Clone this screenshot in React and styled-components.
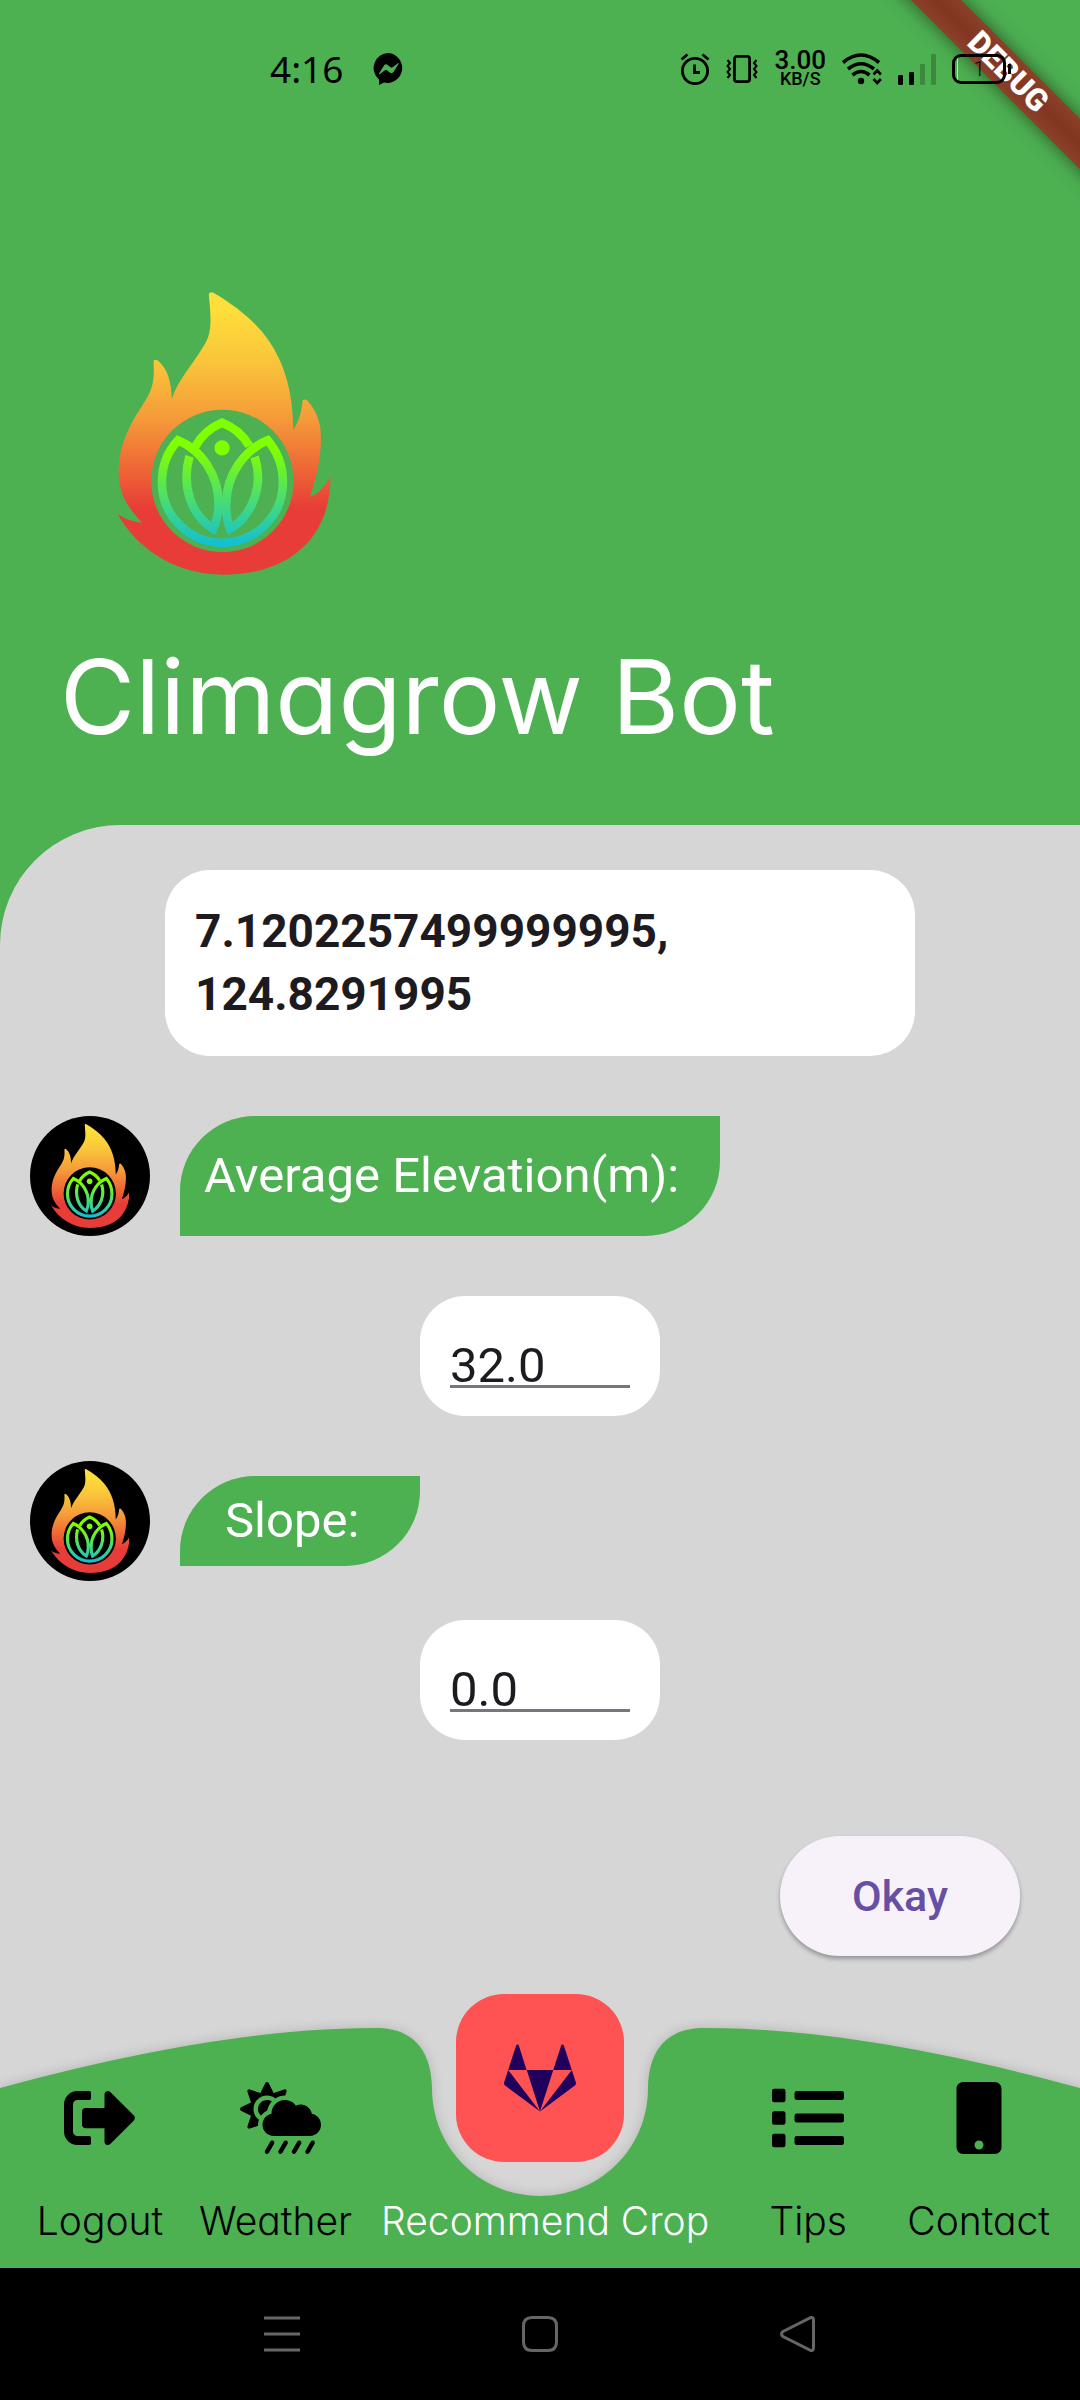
import React, { useId } from "react";
import styled, { createGlobalStyle } from "styled-components";
import { FaSignOutAlt, FaCloudSunRain, FaList, FaMobile } from "react-icons/fa";

const color = {
  green: "#4db051",
  panel: "#d6d6d6",
  ink: "#1d1b20",
  outline: "#79747e",
  violet: "#6750a4",
  tonal: "#f7f2fa",
  coral: "#ff5252",
  indigo: "#21005d",
};

const GlobalStyle = createGlobalStyle`
  *, *::before, *::after { box-sizing: border-box; }
  body { margin: 0; background: ${color.green}; }
  button, input { font: inherit; }
  svg { display: block; }
`;

const Screen = styled.div`
  position: relative;
  display: flex;
  flex-direction: column;
  min-height: 100vh;
  overflow: hidden;
  background: ${color.green};
  color: ${color.ink};
  font-family: Roboto, "Liberation Sans", sans-serif;
`;

/* ---------- status bar ---------- */

const StatusBar = styled.div`
  position: relative;
  z-index: 2;
  display: flex;
  align-items: center;
  justify-content: space-between;
  height: 138px;
  padding: 0 69px 0 270px;
  color: #000;
`;

const StatusGroup = styled.div`
  display: flex;
  align-items: center;
  gap: ${(p) => p.$gap}px;
`;

const Clock = styled.time`
  font-family: "Noto Sans", sans-serif;
  font-size: 37px;
  line-height: 48px;
`;

const NetSpeed = styled.div`
  display: flex;
  flex-direction: column;
  align-items: center;
  font-weight: 500;
`;

const SpeedValue = styled.span`
  font-size: 26px;
  line-height: 20px;
`;

const SpeedUnit = styled.span`
  font-size: 18px;
  line-height: 18px;
`;

const Battery = styled.div`
  display: flex;
  align-items: center;
  gap: 2px;
  &::after {
    content: "";
    width: 3px;
    height: 10px;
    background: #000;
  }
`;

const BatteryShell = styled.div`
  display: flex;
  align-items: center;
  justify-content: center;
  width: 54px;
  height: 30px;
  border: 3px solid #000;
  border-radius: 9px;
  font-size: 20px;
  line-height: 20px;
  font-weight: 300;
  background: linear-gradient(90deg, transparent 2px, #e8e84a 2px, #e8e84a 3px, transparent 3px);
`;

/* ---------- debug ribbon ---------- */

const RibbonCorner = styled.div`
  position: absolute;
  top: 0;
  right: 0;
  z-index: 1;
  width: 240px;
  height: 240px;
  overflow: hidden;
`;

const Ribbon = styled.div`
  position: absolute;
  top: 54px;
  left: 18px;
  width: 300px;
  height: 36px;
  transform: rotate(45deg);
  background: linear-gradient(#8a4129, #823622 50%, #8a4129);
  box-shadow: 0 0 18px rgba(0, 0, 0, 0.5);
  color: #fff;
  font-size: 31px;
  line-height: 36px;
  font-weight: 900;
  text-align: center;
`;

/* ---------- header ---------- */

const Header = styled.header`
  display: flex;
  flex-direction: column;
  align-items: flex-start;
  gap: 60px;
  padding: 154px 60px 66px;
`;

const HeaderLogo = styled.div`
  padding-left: 57px;
  svg { height: 283px; }
`;

const Title = styled.h1`
  margin: 0;
  color: #fff;
  font-family: Inter, sans-serif;
  font-feature-settings: "cv11";
  font-size: 103px;
  line-height: 124px;
  font-weight: 400;
`;

/* ---------- conversation ---------- */

const Conversation = styled.main`
  flex: 1;
  display: flex;
  flex-direction: column;
  align-items: center;
  padding: 45px 30px 72px;
  border-top-left-radius: 120px;
  background: ${color.panel};
`;

const Coordinates = styled.p`
  width: 750px;
  max-width: 100%;
  margin: 0;
  padding: 30px;
  border-radius: 45px;
  background: #fff;
  font-size: 46px;
  line-height: 63px;
  font-weight: 700;
`;

const BotMessage = styled.div`
  display: flex;
  align-items: center;
  align-self: stretch;
  gap: 30px;
  margin-top: ${(p) => p.$above}px;
`;

const Avatar = styled.div`
  display: flex;
  align-items: center;
  justify-content: center;
  width: 120px;
  height: 120px;
  border-radius: 50%;
  background: #000;
  svg { height: 104px; }
`;

const Bubble = styled.label`
  display: flex;
  align-items: center;
  width: ${(p) => p.$width}px;
  height: ${(p) => p.$height}px;
  padding-left: ${(p) => p.$inset}px;
  border-radius: 75px 0 75px 0;
  background: ${color.green};
  color: #fff;
  font-size: 49px;
  line-height: 60px;
`;

const Answer = styled.div`
  width: 240px;
  height: 120px;
  margin-top: ${(p) => p.$above}px;
  padding: 30px;
  border-radius: 45px;
  background: #fff;
`;

const AnswerInput = styled.input`
  display: block;
  width: 100%;
  height: 62px;
  padding: 20px 0 0;
  border: 0;
  border-bottom: 3px solid ${color.outline};
  border-radius: 0;
  outline: 0;
  background: transparent;
  color: ${color.ink};
  font-size: 49px;
`;

const OkayButton = styled.button`
  align-self: flex-end;
  width: 240px;
  height: 120px;
  margin: 96px 30px 0 0;
  border: 0;
  border-radius: 60px;
  background: ${color.tonal};
  box-shadow: 0 3px 4px rgba(0, 0, 0, 0.3);
  color: ${color.violet};
  font-size: 43px;
  line-height: 60px;
  font-weight: 500;
`;

/* ---------- bottom navigation ---------- */

const NavArea = styled.nav`
  position: relative;
  height: 240px;
  background: ${color.panel};
`;

const NavShape = styled.svg`
  position: absolute;
  inset: 0;
  width: 100%;
  height: 100%;
  overflow: visible;
  filter: drop-shadow(0 0 6px rgba(0, 0, 0, 0.16));
`;

const NavList = styled.ul`
  position: relative;
  display: flex;
  justify-content: space-between;
  margin: 0;
  padding: 54px 30px 0;
  list-style: none;
`;

const NavLink = styled.a`
  display: flex;
  flex-direction: column;
  align-items: center;
  gap: 43px;
  min-width: 140px;
  color: ${(p) => (p.$active ? "#fff" : "#000")};
  font-family: Inter, sans-serif;
  font-feature-settings: "cv11";
  font-size: 39px;
  line-height: 48px;
  font-weight: 300;
  text-decoration: none;
  white-space: nowrap;
`;

const NavIcon = styled.span`
  width: 72px;
  height: 72px;
  svg {
    width: ${(p) => p.$width}px;
    height: 72px;
  }
`;

const CenterButton = styled.button`
  position: absolute;
  top: -34px;
  left: 50%;
  display: flex;
  align-items: center;
  justify-content: center;
  width: 168px;
  height: 168px;
  margin-left: -84px;
  padding: 0;
  border: 0;
  border-radius: 48px;
  background: ${color.coral};
  color: ${color.indigo};
`;

const SystemBar = styled.div`
  display: flex;
  align-items: center;
  justify-content: center;
  gap: 222px;
  height: 132px;
  background: #000;
`;

const SystemKey = styled.button`
  padding: 0;
  border: 0;
  background: none;
  color: #666;
`;

/* ---------- drawings ---------- */

function FlameLogo() {
  const id = useId();
  return (
    <svg viewBox="82 66 643 851" role="img" aria-label="Climagrow">
      <defs>
        <linearGradient id={id + "f"} gradientUnits="userSpaceOnUse" x1="0" y1="66" x2="0" y2="916">
          <stop offset="0.06" stopColor="#ffde3b" />
          <stop offset="0.24" stopColor="#f9c63a" />
          <stop offset="0.45" stopColor="#f59a39" />
          <stop offset="0.64" stopColor="#ee6236" />
          <stop offset="0.77" stopColor="#e73c38" />
        </linearGradient>
        <linearGradient id={id + "l"} gradientUnits="userSpaceOnUse" x1="0" y1="445" x2="0" y2="833">
          <stop offset="0.25" stopColor="#80ff00" />
          <stop offset="0.55" stopColor="#55e45c" />
          <stop offset="0.97" stopColor="#15c0d0" />
        </linearGradient>
      </defs>
      <path
        fill={`url(#${id}f)`}
        fillRule="evenodd"
        d="M358 73Q361 64 372 68C430 102 480 140 520 188C580 262 611 355 612 480C630 455 637 425 640 393Q645 386 655 393C684 425 696 465 695 500C697 560 681 628 662 682C688 674 712 646 724 620C725 700 700 770 655 820C590 890 500 916 400 916C270 916 150 850 83 733C100 748 130 757 158 760C110 710 88 670 87 610C86 540 110 482 150 420C188 362 195 345 192 273Q196 266 206 273C235 299 245 335 247 388C262 335 310 285 343 228C370 188 364 140 358 73ZM399 420a214 214 0 1 0 0 428a214 214 0 1 0 0-428Z"
      />
      <g fill="none" stroke={`url(#${id}l)`} strokeWidth="26">
        <path d="M387 700C387 615 334 540 265 512C234 546 217 590 217 638A182 182 0 0 0 581 638C581 590 564 546 535 512C466 540 411 615 411 700" />
        <path d="M317 531C338 493 366 472 398 459C431 472 460 493 480 529" />
        <path d="M300 560C275 650 305 737 371 778C382 755 389 730 388 690" />
        <path d="M496 562C525 650 487 740 422 778C413 755 409 730 410 690" />
      </g>
      <circle cx="398" cy="535" r="23" fill="#80ff00" />
    </svg>
  );
}

function MessengerIcon() {
  return (
    <svg width="31" height="32" viewBox="0 0 31 32" aria-hidden="true">
      <path d="M15.500 0a15 15 0 1 1-4.500 29.600L6 32v-5.500A15 15 0 0 1 15.500 0z" />
      <path fill={color.green} d="M6 20.500l5-8q1.500-2 3.600-.5l3 2.300q1 .7 2 0l5.400-4q1.200-.6.500.700l-5 8.100q-1.500 2-3.600.5l-3-2.300q-1-.6-2 0l-5.200 3.900q-1.300.5-.7-.7z" />
    </svg>
  );
}

function AlarmIcon() {
  return (
    <svg width="30" height="32" viewBox="0 0 30 32" fill="none" stroke="#000" strokeWidth="2.800" aria-hidden="true">
      <circle cx="15" cy="18" r="12.600" />
      <path d="M1.500 6.500l6-5M28.500 6.500l-6-5M14.500 11.500v8h5.500" />
    </svg>
  );
}

function VibrateIcon() {
  return (
    <svg width="32" height="30" viewBox="0 0 32 30" fill="none" stroke="#000" strokeWidth="2.800" aria-hidden="true">
      <rect x="8.400" y="2.400" width="15.200" height="25.200" rx="2.500" />
      <path strokeWidth="2" d="M1.500 6l2.500 3-2.500 3 2.500 3-2.500 3 2.500 3-2.500 3M30.500 6L28 9l2.500 3-2.500 3 2.500 3-2.500 3 2.500 3" />
    </svg>
  );
}

function WifiIcon() {
  return (
    <svg width="40" height="32" viewBox="0 0 40 32" fill="none" stroke="#000" strokeWidth="3.600" aria-hidden="true">
      <path d="M1 9.500Q19 -5.500 37 9.500M6 16Q19 5.500 32 16M10.500 22Q19 15 27.500 22" />
      <circle cx="19" cy="28" r="3.200" fill="#000" stroke="none" />
      <path strokeWidth="2.600" d="M31.500 21.500l3.700-4 3.700 4M31.500 26l3.700 4 3.700-4" />
    </svg>
  );
}

function SignalIcon() {
  return (
    <svg width="38" height="31" viewBox="0 0 38 31" aria-hidden="true">
      <rect y="21" width="5" height="10" rx="1" />
      <rect x="11" y="18" width="5" height="13" rx="1" />
      <rect x="22" y="10" width="5" height="21" rx="1" opacity=".22" />
      <rect x="33" width="5" height="31" rx="1" opacity=".22" />
    </svg>
  );
}

function FoxIcon() {
  return (
    <svg width="72" height="72" viewBox="0 0 512 512" fill="currentColor" aria-hidden="true">
      <path d="M105.200 24.900c-3.100-8.900-15.700-8.900-18.900 0L29.800 199.700h132c-.1 0-56.600-174.800-56.600-174.800zM.9 287.700c-2.600 8 .3 16.900 7.100 22l247.900 184-226.200-294zm160.800-88l94.300 294 94.300-294zm349.400 88l-28.800-88-226.300 294 247.900-184c6.900-5.100 9.700-14 7.200-22zM425.700 24.900c-3.100-8.900-15.700-8.900-18.900 0l-56.600 174.800h132z" />
    </svg>
  );
}

const systemKeys = [
  { name: "Recent apps", path: "M0 2h36M0 18h36M0 34h36" },
  { name: "Home", path: "M10 1.500h16q8.500 0 8.500 8.500v16q0 8.500-8.500 8.500h-16q-8.500 0-8.500-8.500v-16q0-8.500 8.500-8.500z" },
  { name: "Back", path: "M3 15.500L30 1.800q3.500-1 3.500 2.200v28q0 3.200-3.500 2.200L3 20.500q-3-2.500 0-5z" },
];

const navItems = [
  { label: "Logout", icon: <FaSignOutAlt />, width: 72 },
  { label: "Weather", icon: <FaCloudSunRain />, width: 81 },
  { label: "Recommend Crop", active: true, width: 72 },
  { label: "Tips", icon: <FaList />, width: 72 },
  { label: "Contact", icon: <FaMobile />, width: 72 },
];

export default function App() {
  return (
    <Screen>
      <GlobalStyle />
      <StatusBar>
        <StatusGroup $gap={30}>
          <Clock>4:16</Clock>
          <MessengerIcon />
        </StatusGroup>
        <StatusGroup $gap={16}>
          <AlarmIcon />
          <VibrateIcon />
          <NetSpeed>
            <SpeedValue>3.00</SpeedValue>
            <SpeedUnit>KB/S</SpeedUnit>
          </NetSpeed>
          <WifiIcon />
          <SignalIcon />
          <Battery>
            <BatteryShell>1</BatteryShell>
          </Battery>
        </StatusGroup>
      </StatusBar>
      <RibbonCorner>
        <Ribbon>DEBUG</Ribbon>
      </RibbonCorner>

      <Header>
        <HeaderLogo>
          <FlameLogo />
        </HeaderLogo>
        <Title>Climagrow Bot</Title>
      </Header>

      <Conversation>
        <Coordinates>
          7.1202257499999995,
          <br />
          124.8291995
        </Coordinates>

        <BotMessage $above={60}>
          <Avatar><FlameLogo /></Avatar>
          <Bubble htmlFor="elevation" $width={540} $height={120} $inset={24}>
            Average Elevation(m):
          </Bubble>
        </BotMessage>
        <Answer $above={60}>
          <AnswerInput id="elevation" type="text" inputMode="decimal" defaultValue="32.0" />
        </Answer>

        <BotMessage $above={45}>
          <Avatar><FlameLogo /></Avatar>
          <Bubble htmlFor="slope" $width={240} $height={90} $inset={45}>
            Slope:
          </Bubble>
        </BotMessage>
        <Answer $above={39}>
          <AnswerInput id="slope" type="text" inputMode="decimal" defaultValue="0.0" />
        </Answer>

        <OkayButton type="button">Okay</OkayButton>
      </Conversation>

      <NavArea>
        <NavShape viewBox="0 0 1080 240" preserveAspectRatio="none" aria-hidden="true">
          <path
            fill={color.green}
            d="M0 60Q220 0 375 0C410 0 431 18 432 60C432 122 482 168 540 168S648 122 648 60C649 18 670 0 705 0Q860 0 1080 60V240H0Z"
          />
        </NavShape>
        <NavList>
          {navItems.map((item) => (
            <li key={item.label}>
              <NavLink href="#" $active={item.active}>
                <NavIcon $width={item.width}>{item.icon}</NavIcon>
                {item.label}
              </NavLink>
            </li>
          ))}
        </NavList>
        <CenterButton type="button" aria-label="Recommend Crop">
          <FoxIcon />
        </CenterButton>
      </NavArea>

      <SystemBar>
        {systemKeys.map((key) => (
          <SystemKey key={key.name} type="button" aria-label={key.name}>
            <svg width="36" height="36" viewBox="0 0 36 36" fill="none" stroke="currentColor" strokeWidth="3">
              <path d={key.path} />
            </svg>
          </SystemKey>
        ))}
      </SystemBar>
    </Screen>
  );
}
